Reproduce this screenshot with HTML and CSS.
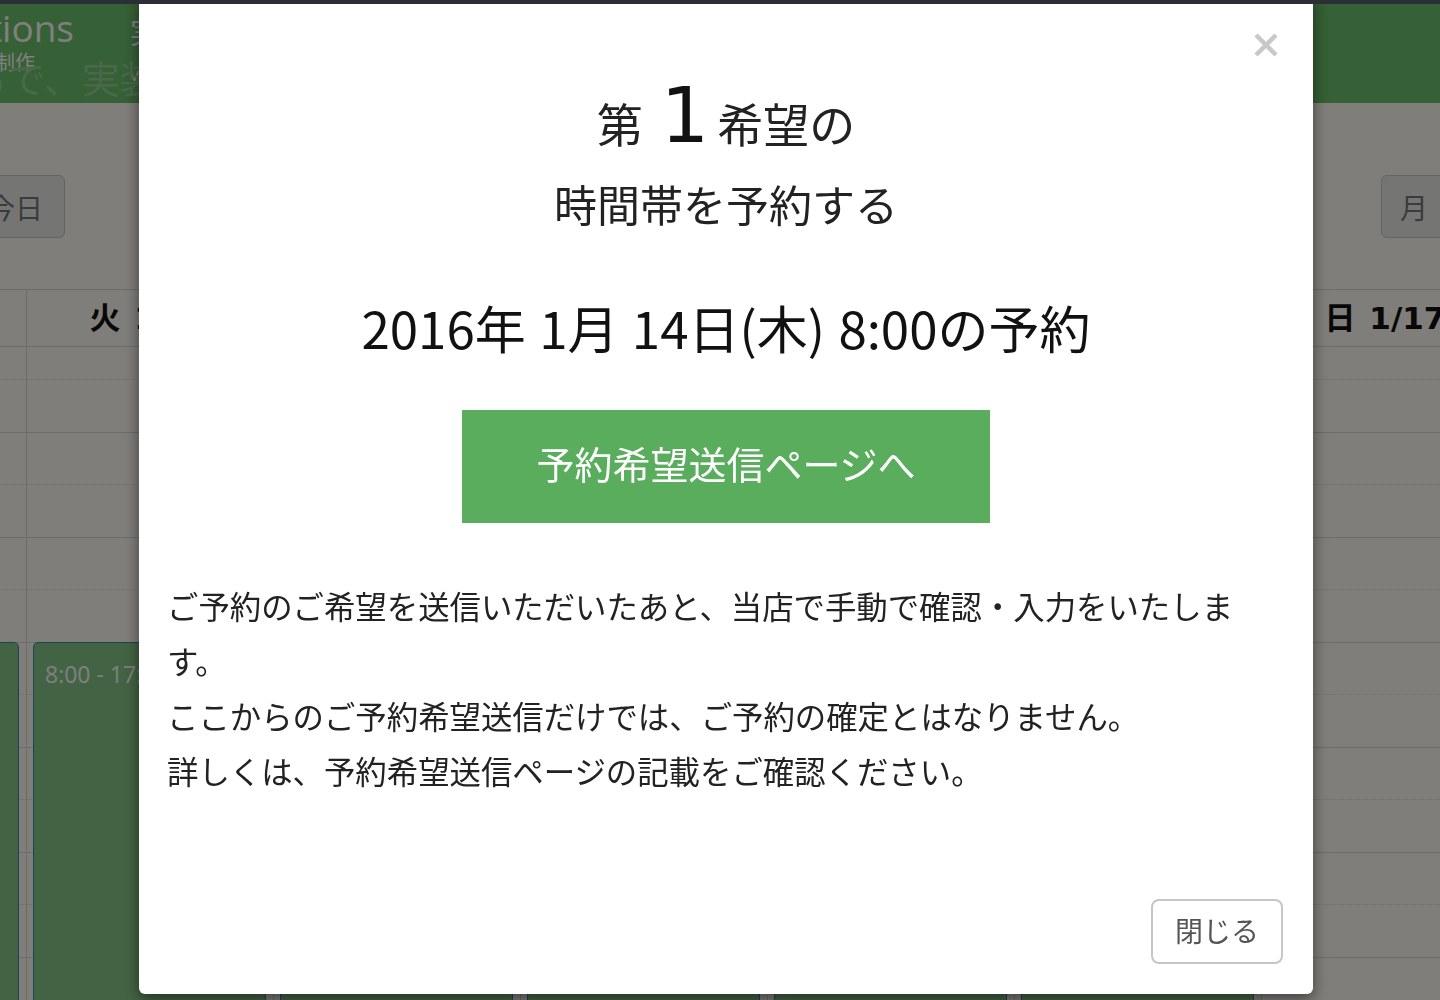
FILE: index.html
```html
<!DOCTYPE html>
<html lang="ja">
<head>
    <meta charset="utf-8">
    <title>予約カレンダー</title>
    <link rel="stylesheet" href="styles.css">
</head>
<body>
    <div class="topbar"></div>

    <header class="site-header">
        <div class="brand">
            <div class="brand-name">Solutions</div>
            <div class="brand-sub">ホームページ制作</div>
        </div>
        <nav class="nav">
            <a href="#">実績紹介<small>view works</small></a>
        </nav>
        <p class="catch">思いをかたちにするところで、実装まで</p>
    </header>

    <div class="calendar">
        <div class="toolbar">
            <button class="fc-button today">今日</button>
            <div class="btn-group">
                <button class="fc-button">月</button>
                <button class="fc-button">週</button>
                <button class="fc-button">日</button>
            </div>
        </div>

        <div class="cal-grid">
            <div class="cal-head">
                <div class="cal-th"></div>
                <div class="cal-th">月 1/11</div>
                <div class="cal-th">火 1/12</div>
                <div class="cal-th">水 1/13</div>
                <div class="cal-th">木 1/14</div>
                <div class="cal-th">金 1/15</div>
                <div class="cal-th">土 1/16</div>
                <div class="cal-th">日 1/17</div>
            </div>
            <div class="cal-body">
                <div class="slat first"></div>
                <div class="slat hour"></div>
                <div class="slat"></div>
                <div class="slat hour"></div>
                <div class="slat"></div>
                <div class="slat hour"></div>
                <div class="slat"></div>
                <div class="slat hour"></div>
                <div class="slat"></div>
                <div class="slat hour"></div>
                <div class="slat"></div>
                <div class="slat hour"></div>
                <div class="slat"></div>

                <div class="cal-cols">
                    <div class="cal-col axis"></div>
                    <div class="cal-col"><div class="event">8:00 - 17:00</div></div>
                    <div class="cal-col"><div class="event">8:00 - 17:00</div></div>
                    <div class="cal-col"><div class="event">8:00 - 17:00</div></div>
                    <div class="cal-col"><div class="event">8:00 - 17:00</div></div>
                    <div class="cal-col"><div class="event">8:00 - 17:00</div></div>
                    <div class="cal-col"><div class="event">8:00 - 17:00</div></div>
                    <div class="cal-col"></div>
                </div>
            </div>
        </div>
    </div>

    <div class="modal-backdrop"></div>

    <div class="modal">
        <div class="modal-dialog">
            <button class="modal-close" aria-label="閉じる">
                <svg width="24" height="24" viewBox="0 0 24 24">
                    <path d="M2 2 L22 22 M22 2 L2 22" stroke="#c8c8c8" stroke-width="4.5" fill="none"/>
                </svg>
            </button>
            <div class="modal-body">
                <h2 class="modal-title"><span class="title-lead">第<span class="rank">1</span>希望の</span><br>時間帯を予約する</h2>
                <p class="slot-date">2016年 1月 14日(木) 8:00の予約</p>
                <a class="btn-reserve" href="#">予約希望送信ページへ</a>
                <p class="notice">ご予約のご希望を送信いただいたあと、当店で手動で確認・入力をいたします。<br>ここからのご予約希望送信だけでは、ご予約の確定とはなりません。<br>詳しくは、予約希望送信ページの記載をご確認ください。</p>
            </div>
            <div class="modal-footer">
                <button class="btn-close">閉じる</button>
            </div>
        </div>
    </div>
</body>
</html>
```
FILE: styles.css
```css
body {
    margin: 0;
    height: 1000px;
    overflow: hidden;
    font-family: "Noto Sans CJK JP", sans-serif;
    background-color: #fefcf4;
    color: #222;
}

.topbar {
    position: fixed;
    top: 0;
    left: 0;
    right: 0;
    height: 4px;
    background-color: #2b2f35;
    z-index: 1100;
}

/* page behind the modal */

.site-header {
    position: relative;
    display: flex;
    height: 103px;
    background-color: #6cc06c;
    color: #fff;
}

.brand {
    width: 74px;
    display: flex;
    flex-direction: column;
    align-items: flex-end;
}

.brand-name {
    margin-top: 6px;
    font-family: "Open Sans", sans-serif;
    font-size: 37px;
    line-height: 44px;
    white-space: nowrap;
}

.brand-sub {
    margin-right: 39px;
    font-size: 20px;
    line-height: 24px;
    white-space: nowrap;
}

.nav {
    margin-left: 56px;
}

.nav a {
    display: flex;
    flex-direction: column;
    padding-top: 12px;
    color: #fff;
    text-decoration: none;
    font-size: 30px;
    line-height: 36px;
    white-space: nowrap;
}

.nav small {
    margin-top: 16px;
    font-family: "Open Sans", sans-serif;
    font-size: 18px;
    line-height: 20px;
}

.catch {
    position: absolute;
    left: -449px;
    top: 58px;
    margin: 0;
    font-size: 38px;
    line-height: 38px;
    color: #94cf94;
    white-space: nowrap;
}

.calendar {
    margin-left: -300px;
    width: 1808px;
}

.toolbar {
    display: flex;
    margin: 72px -71px 51px 0;
}

.fc-button {
    height: 63px;
    width: 66px;
    padding: 0;
    font-family: inherit;
    font-size: 28px;
    color: #777;
    background-color: #ebebe8;
    border: 1px solid #c8c8c8;
    border-radius: 0;
}

.today {
    width: 100px;
    margin-left: 265px;
    border-radius: 6px;
}

.btn-group {
    display: flex;
    margin-left: auto;
}

.btn-group .fc-button:first-child {
    border-radius: 6px 0 0 6px;
}

.btn-group .fc-button:last-child {
    border-radius: 0 6px 6px 0;
}

.cal-grid {
    border-top: 1px solid #d8d8d4;
}

.cal-head,
.cal-cols {
    display: grid;
    grid-template-columns: 79px repeat(7, 247px);
}

.cal-head {
    height: 56px;
    border-bottom: 1px solid #d8d8d4;
}

.cal-th {
    border-left: 1px solid #d8d8d4;
    text-align: center;
    font-family: "DejaVu Sans", "Noto Sans CJK JP", sans-serif;
    font-weight: bold;
    font-size: 31px;
    word-spacing: 3px;
    line-height: 56px;
    color: #111;
    white-space: nowrap;
}

.cal-th:first-child {
    border-left: none;
}

.cal-body {
    position: relative;
}

.slat {
    box-sizing: border-box;
    height: 52.5px;
    border-bottom: 1px dotted #dcdcd6;
}

.slat.first {
    height: 33px;
}

.slat.hour {
    border-bottom-style: solid;
    border-bottom-color: #d8d8d4;
}

.cal-cols {
    position: absolute;
    top: 0;
    left: 0;
    right: 0;
    bottom: 0;
}

.cal-col {
    position: relative;
    border-left: 1px solid #d8d8d4;
}

.cal-col.axis {
    border-left: none;
}

.event {
    position: absolute;
    top: 295px;
    left: 6px;
    right: 7px;
    height: 600px;
    padding: 16px 11px;
    background-color: #86c888;
    border: 1px solid #3a87ad;
    border-radius: 5px;
    color: #fff;
    font-family: "Open Sans", sans-serif;
    font-size: 23px;
    line-height: 30px;
    white-space: nowrap;
    overflow: hidden;
}

.modal-backdrop {
    position: fixed;
    top: 0;
    left: 0;
    right: 0;
    bottom: 0;
    background-color: #000;
    opacity: 0.5;
}

/* modal */

.modal {
    position: fixed;
    top: 0;
    left: 0;
    right: 0;
    bottom: 0;
    z-index: 1050;
}

.modal-dialog {
    position: relative;
    box-sizing: border-box;
    display: flex;
    flex-direction: column;
    width: 1174px;
    height: 1000px;
    margin: -6px 0 0 139px;
    padding: 0 30px 30px;
    background-color: #fff;
    border-radius: 6px;
    box-shadow: 0 5px 15px rgba(0, 0, 0, 0.5);
}

.modal-close {
    position: absolute;
    top: 39px;
    right: 35px;
    width: 24px;
    height: 24px;
    padding: 0;
    border: none;
    background: none;
    cursor: pointer;
}

.modal-close svg {
    display: block;
}

.modal-title {
    margin: 88px 0 0;
    text-align: center;
    font-size: 43px;
    font-weight: normal;
    line-height: 80px;
    color: #222;
}

.title-lead {
    font-size: 46px;
}

.rank {
    margin: 0 8px 0 18px;
    font-family: "DejaVu Sans", sans-serif;
    font-size: 76px;
    line-height: 0;
    color: #111;
}

.slot-date {
    margin: 44px 0 0;
    text-align: center;
    font-size: 51px;
    word-spacing: 2px;
    line-height: 80px;
    color: #111;
}

.btn-reserve {
    display: block;
    box-sizing: border-box;
    width: 528px;
    height: 113px;
    margin: 43px auto 0;
    padding-bottom: 8px;
    background-color: #5aad5c;
    color: #fff;
    text-align: center;
    text-decoration: none;
    font-size: 38px;
    line-height: 105px;
}

.notice {
    max-width: 1090px;
    margin: 55px 0 0 -2px;
    font-size: 31.4px;
    line-height: 55px;
    color: #222;
}

.modal-footer {
    display: flex;
    justify-content: flex-end;
    margin-top: auto;
}

.btn-close {
    width: 132px;
    height: 65px;
    padding: 0 0 4px;
    font-family: inherit;
    font-size: 28px;
    color: #555;
    background-color: #fff;
    border: 2px solid #c3c7cb;
    border-radius: 8px;
    cursor: pointer;
}
```
